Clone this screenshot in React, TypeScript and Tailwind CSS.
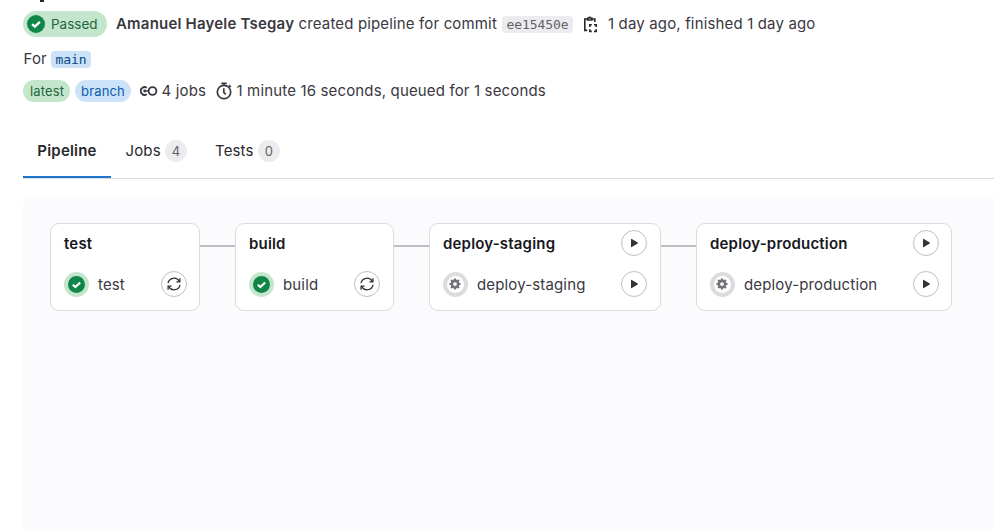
import React from "react";

const Check = ({ className }: { className: string }) => (
  <svg viewBox="0 0 18 18" className={className}>
    <circle cx="9" cy="9" r="9" fill="#108548" />
    <path d="M5.1 9.2 7.8 11.7 12.9 6.8" fill="none" stroke="#fff" strokeWidth="2.3" />
  </svg>
);

const Gear = () => (
  <svg viewBox="0 0 16 16" className="mr-px size-[12px]">
    <circle cx="8" cy="8" r="4.2" fill="none" stroke="#737278" strokeWidth="3.4" />
    {[0, 45, 90, 135].map((a) => (
      <path key={a} d="M8 .6V3.4M8 12.6v2.800" stroke="#737278" strokeWidth="2.8" transform={`rotate(${a} 8 8)`} />
    ))}
  </svg>
);

const Play = () => (
  <svg viewBox="0 0 16 16" className="size-4">
    <path d="M5 4.3v7.4c0 .4.4.6.8.4l5.9-3.6c.4-.3.4-.7 0-1L5.8 3.900c-.4-.2-.8 0-.8.4Z" fill="#333238" />
  </svg>
);

const Retry = () => (
  <svg viewBox="0 0 16 16" className="size-4" fill="none" stroke="#333238" strokeWidth="1.3">
    <path d="M2 7.2A6.1 6.1 0 0 1 13.4 5.5M14 8.8A6.1 6.1 0 0 1 2.6 10.5" />
    <path d="M13.9 2.3v3.5h-3.5M2.1 13.7v-3.5h3.5" />
  </svg>
);

const Round = ({ children }: { children: React.ReactNode }) => (
  <button className="flex size-[26px] shrink-0 items-center justify-center rounded-full border border-[#bfbfc3] bg-white">
    {children}
  </button>
);

const Clipboard = () => (
  <svg viewBox="0 0 16 18" className="h-[18px] w-4" fill="none" stroke="#28272d" strokeWidth="1.6">
    <path d="M4 4H1.8v11.4H4.3M9.6 4h2.2v3" />
    <path d="M4.6 5V3.2h1a1.3 1.3 0 0 1 2.4 0h1V5Z" />
    <path d="M6.8 12v-2.2h2M11 9.8h2.2V12M13.2 14.2v2.2H11M8.8 16.4h-2v-2.2" />
  </svg>
);

const JobsIcon = () => (
  <svg viewBox="0 0 18 12" className="h-3 w-[18px]" fill="none" stroke="#3a383f" strokeWidth="1.8">
    <path d="M6.8 2.7A3.9 3.9 0 1 0 6.8 9.3" />
    <circle cx="12.5" cy="6" r="3.9" />
    <circle cx="4.7" cy="6" r="1.4" fill="#3a383f" stroke="none" />
    <path d="M4.7 6H8.5" strokeWidth="1.4" />
  </svg>
);

const Timer = () => (
  <svg viewBox="0 0 16 18" className="h-[18px] w-4" fill="none" stroke="#3a383f" strokeWidth="1.7">
    <circle cx="8" cy="10" r="6.7" />
    <path d="M5.3 1.3h5.4M8 1.3V3.5M13 3.2l1.8 1.8M7.8 6.3v4l2 2" />
  </svg>
);

type Stage = { name: string; done: boolean; box: string };

const stages: Stage[] = [
  { name: "test", done: true, box: "w-[150px] pr-3" },
  { name: "build", done: true, box: "w-[159px] pr-[13px]" },
  { name: "deploy-staging", done: false, box: "w-[232px] pr-[13px]" },
  { name: "deploy-production", done: false, box: "w-[256px] pr-3" },
];

const StageCard = ({ name, done, box }: Stage) => (
  <section className={`h-[88px] shrink-0 rounded-[9px] border border-[#dcdcde] bg-white pl-[13px] ${box}`}>
    <div className="flex h-[38px] items-center justify-between">
      <h2 className="pt-px font-semibold tracking-[0.18px] text-[#18171d]">{name}</h2>
      {!done && <Round><Play /></Round>}
    </div>
    <div className="mt-[9px] flex h-[26px] items-center justify-between">
      <div className="flex items-center">
        {done ? (
          <span className="flex size-[25px] items-center justify-center rounded-full bg-[#c3e6cd]"><Check className="size-[17px]" /></span>
        ) : (
          <span className="flex size-[25px] items-center justify-center rounded-full border-4 border-[#dcdcde] bg-white"><Gear /></span>
        )}
        <span className="ml-[9px] pt-px">{name}</span>
      </div>
      <Round>{done ? <Retry /> : <Play />}</Round>
    </div>
  </section>
);

export default function App() {
  return (
    <main className="h-[529px] w-[994px] overflow-hidden bg-white pl-[23px] font-['Inter',sans-serif] text-[15px] leading-5 tracking-[0.15px] whitespace-nowrap text-[#3a383f]">
      <div className="h-[11px] pl-[17px]">
        <div className="h-[2px] w-1 bg-[#28272d]" />
      </div>
      <div className="flex h-[26px] items-center">
        <span className="flex h-[26px] w-[84px] items-center rounded-full bg-[#c3e6cd] pl-1 text-[13.5px] tracking-normal text-[#24663b]">
          <Check className="size-[18px]" />
          <span className="ml-[6px]">Passed</span>
        </span>
        <b className="ml-[9px] w-[182.5px] font-semibold tracking-[0.2px]">Amanuel Hayele Tsegay</b>
        <span className="w-[203.5px]">created pipeline for commit</span>
        <code className="flex h-[17px] w-[71px] items-center justify-center rounded bg-[#ececef] pt-px font-['DejaVu_Sans_Mono',monospace] text-[13px] tracking-[-0.08px] text-[#626168]">ee15450e</code>
        <span className="ml-[10px]"><Clipboard /></span>
        <span className="ml-[9px]">1 day ago, finished 1 day ago</span>
      </div>
      <div className="mt-3 flex h-5 items-center">
        <span className="w-7 pl-[0.5px]">For</span>
        <code className="flex h-[17px] w-10 items-center justify-center rounded bg-[#cbe2f9] pt-px font-['DejaVu_Sans_Mono',monospace] text-[13px] tracking-[-0.08px] text-[#064787]">main</code>
      </div>
      <div className="mt-[11px] flex h-[22px] items-center">
        <span className="flex h-[22px] w-[47px] items-center justify-center rounded-full bg-[#c3e6cd] pl-px text-[13px] text-[#24663b]">latest</span>
        <span className="ml-[5px] flex h-[22px] w-14 items-center justify-center rounded-full bg-[#cbe2f9] text-[13px] text-[#0b5cad]">branch</span>
        <span className="ml-[9px]"><JobsIcon /></span>
        <span className="ml-[3.5px] w-[44.5px]">4 jobs</span>
        <span className="ml-[10px]"><Timer /></span>
        <span className="ml-[4.5px]">1 minute 16 seconds, queued for 1 seconds</span>
      </div>
      <nav className="mt-[21px] flex h-[56px] border-b border-[#dcdcde]">
        <div className="flex h-[55px] w-[88px] items-center justify-center border-b-2 border-[#1f75cb] pt-[2px] font-semibold tracking-[0.2px] text-[#28272d]">Pipeline</div>
        <div className="ml-[14px] flex h-[55px] items-center border-b-2 border-transparent pt-[2px] text-[#28272d]">
          <span className="w-10 pl-[0.5px]">Jobs</span>
          <span className="flex size-[22px] items-center justify-center rounded-full bg-[#ececef] text-[13px] text-[#626168]">4</span>
        </div>
        <div className="ml-7 flex h-[55px] items-center border-b-2 border-transparent pt-[2px] text-[#28272d]">
          <span className="w-[43px]">Tests</span>
          <span className="flex size-[22px] items-center justify-center rounded-full bg-[#ececef] text-[13px] text-[#626168]">0</span>
        </div>
      </nav>
      <div className="mt-[18px] flex h-[332px] items-start rounded-tl-lg bg-[#fbfafd] pt-[26px] pl-[27px]">
        {stages.map((s, i) => (
          <React.Fragment key={s.name}>
            {i > 0 && <div className="mt-[22px] h-[2px] w-[35px] shrink-0 bg-[#bfbfc3]" />}
            <StageCard {...s} />
          </React.Fragment>
        ))}
      </div>
    </main>
  );
}
